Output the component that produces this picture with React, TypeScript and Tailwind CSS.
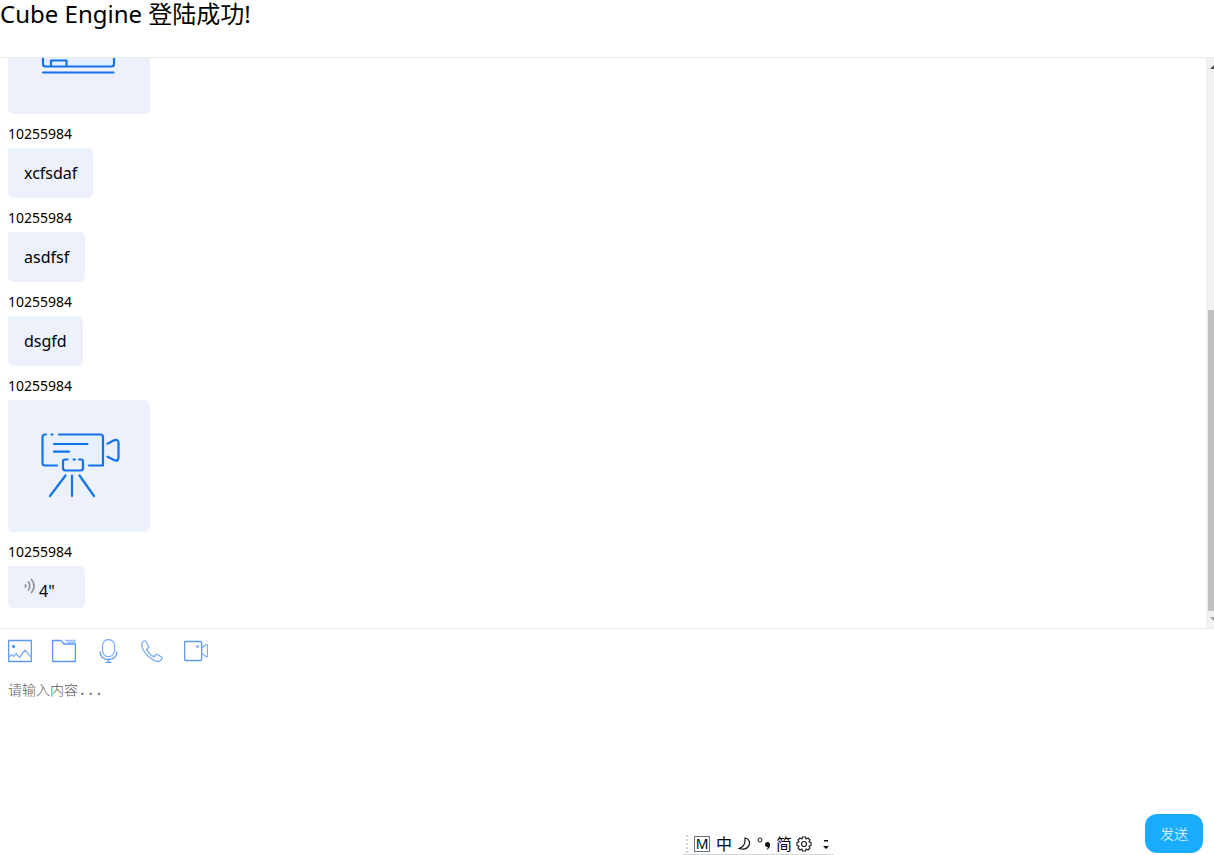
import React, { JSX, useState } from "react";

type Message = {
  id: number;
  sender?: string;
  type: "text" | "whiteboard" | "camera" | "voice";
  text?: string;
};

const messages: Message[] = [
  { id: 1, type: "whiteboard" },
  { id: 2, sender: "10255984", type: "text", text: "xcfsdaf" },
  { id: 3, sender: "10255984", type: "text", text: "asdfsf" },
  { id: 4, sender: "10255984", type: "text", text: "dsgfd" },
  { id: 5, sender: "10255984", type: "camera" },
  { id: 6, sender: "10255984", type: "voice", text: '4"' },
];

function WhiteboardPicture(): JSX.Element {
  return (
    <svg width="110" height="100" viewBox="0 0 110 100" fill="none" stroke="#1273eb" strokeWidth="2.2" strokeLinecap="round" strokeLinejoin="round">
      <path d="M19 28V66q0 2.500 2.500 2.500H87.500q2.500 0 2.500-2.500V28q0-2-2-2H21q-2 0-2 2z" fill="#e5f0fe" />
      <path d="M27 68V62.500H42.500V68" />
      <path d="M19 74.500H89.500" />
    </svg>
  );
}

function CameraPicture(): JSX.Element {
  return (
    <svg width="110" height="100" viewBox="0 0 110 100" fill="none" stroke="#1273eb" strokeWidth="2.2" strokeLinecap="round" strokeLinejoin="round">
      <path d="M19 20H78V49H19z" fill="#e7f1fe" stroke="none" />
      <path d="M22 18.500H21Q18.500 18.500 18.500 21V47Q18.500 49.500 21 49.500H33" />
      <path d="M27.500 18.500H28.500M35 18.500H76.500Q79 18.500 79 21V49.500H65" />
      <path d="M30 28H63.500M30 35.700H45" />
      <path d="M83.500 27.700L89.500 24.500Q94.500 22.500 94.500 27V41Q94.500 46 90 44L83.500 40.700" />
      <path d="M43.500 43.500H41Q39 43.500 39 45.500V52Q39 54.500 41.500 54.500H56.500Q59 54.500 59 52V45.500Q59 43.500 57 43.500H55M49.500 43.500H51" />
      <path d="M41.500 59.500L26 80M48 59.500V80M55.500 59.500L70 80" />
    </svg>
  );
}

function VoiceIcon(): JSX.Element {
  return (
    <svg width="12" height="16" viewBox="0 0 12 16" fill="none" stroke="#92969d" strokeLinecap="round" className="mb-0.5">
      <path d="M1.500 7Q2.200 8 1.500 9" strokeWidth="1.800" />
      <path d="M4.500 4Q7 8 4.500 12" strokeWidth="1.700" />
      <path d="M7.500 1.500Q12.500 8 7.500 14.500" strokeWidth="1.700" />
    </svg>
  );
}

function Bubble({ message }: { message: Message }): JSX.Element {
  const base = "w-fit rounded-[5px] rounded-tl-none bg-[#ecf1fc] px-4";

  if (message.type === "whiteboard" || message.type === "camera") {
    return (
      <div className={`${base} py-4`}>
        {message.type === "camera" ? <CameraPicture /> : <WhiteboardPicture />}
      </div>
    );
  }

  if (message.type === "voice") {
    return (
      <button type="button" className={`${base} flex h-[42px] min-w-[77px] items-center gap-[3px]`}>
        <VoiceIcon />
        <span className="mt-2 text-base">{message.text}</span>
      </button>
    );
  }

  return <p className={`${base} py-[13px] text-base leading-6`}>{message.text}</p>;
}

const tools = [
  {
    label: "图片",
    icon: (
      <>
        <path d="M.6 1.500H23.400V22.500H.6z" />
        <path d="M.6 18.500L3.500 15.500L6 17.500L8 14.500L11.500 18.500L17 11L23.400 18.500" stroke="#7fb0f7" />
        <circle cx="5.500" cy="7.500" r="1" fill="#4f8ff0" />
      </>
    ),
  },
  {
    label: "文件",
    icon: (
      <>
        <path d="M.6 1.500H9L12 5H23.400V22.500H.6z" />
        <path d="M13 1.500H23.500M15 3.500H23.500" stroke="#94bdf8" />
      </>
    ),
  },
  {
    label: "语音",
    icon: (
      <>
        <rect x="6.500" y=".6" width="12" height="17" rx="6" stroke="#7fb0f7" />
        <path d="M4 12.500Q4.500 20.500 12.500 20.500T21 12.500M12.500 20.500V23.400M9.500 23.400H15.500" />
      </>
    ),
  },
  {
    label: "通话",
    icon: (
      <path stroke="#7aabf5" d="M6 2.500L8.500 7Q9 8 8 9L6.500 10.500Q9 15.500 14 18L15.500 16Q16.500 15 17.500 15.500L21.500 18Q22.500 18.500 22 19.500Q21 22 18.500 22.500Q14 22.500 8 17Q2 11 1.500 5.500Q1.500 3.500 4 2Q5.500 1.500 6 2.500z" />
    ),
  },
  {
    label: "视频",
    icon: (
      <>
        <rect x=".6" y="2.500" width="17" height="19" rx="1" />
        <path d="M18 9L22 5.500Q23.400 5 23.400 6.500V17Q23.400 18.500 22 17.500L18 14.500" stroke="#7fb0f7" />
        <circle cx="13.500" cy="7.500" r=".6" />
      </>
    ),
  },
];

function ScrollRail(): JSX.Element {
  return (
    <div className="flex w-2 shrink-0 flex-col items-end overflow-hidden bg-[#f1f1f1]" aria-hidden="true">
      <svg width="4" height="17" viewBox="0 0 4 17" fill="#505050">
        <path d="M0 11L4 7V11z" />
      </svg>
      <div className="grow-[235]" />
      <div className="w-1.5 grow-[301] bg-[#c1c1c1]" />
      <svg width="4" height="17" viewBox="0 0 4 17" fill="#a0a0a0">
        <path d="M0 6H4V10z" />
      </svg>
    </div>
  );
}

function InputMethodBar(): JSX.Element {
  return (
    <div className="absolute bottom-0 left-[683px] flex h-[22px] w-[151px] items-center border-b border-gray-300 bg-white pl-[3px] text-base leading-5 text-black">
      <span className="mr-1.5 h-[18px] border-l-2 border-dotted border-gray-300" />
      <span className="flex size-4 items-center justify-center border border-gray-500 text-sm">M</span>
      <span className="ml-1.5">中</span>
      <svg width="14" height="16" viewBox="0 0 14 16" fill="none" stroke="#111" strokeWidth="1.200" className="ml-1.5">
        <path d="M7 2Q12 3 11.500 8Q9 15 1 12.500Q8 10 7 2z" />
      </svg>
      <svg width="16" height="16" viewBox="0 0 16 16" className="ml-1">
        <circle cx="4" cy="4" r="2" fill="none" stroke="#111" />
        <circle cx="11.500" cy="8.500" r="2.500" fill="#111" />
        <path d="M14 8.500Q14.500 12.500 10 14Q12.500 11.500 11.500 9z" fill="#111" />
      </svg>
      <span className="ml-1">简</span>
      <svg width="16" height="16" viewBox="0 0 16 16" fill="none" stroke="#222" strokeWidth="1.200" strokeLinejoin="round" className="ml-1">
        <path d="M6.500 1H9.500L10 3L12 2L14 4L13 6L15 6.500V9.500L13 10L14 12L12 14L10 13L9.500 15H6.500L6 13L4 14L2 12L3 10L1 9.500V6.500L3 6L2 4L4 2L6 3z" />
        <circle cx="8" cy="8" r="2.500" />
      </svg>
      <svg width="8" height="16" viewBox="0 0 8 16" fill="#111" className="ml-2.5">
        <path d="M2 4H6V5.500H2zM1 10H7L4 13z" />
      </svg>
    </div>
  );
}

function App(): JSX.Element {
  const [draft, setDraft] = useState<string>("");

  return (
    <div className="relative flex h-screen flex-col overflow-hidden bg-white font-['Noto_Sans','Noto_Sans_CJK_SC',sans-serif] text-black">
      <header className="h-[57px] shrink-0">
        <h1 className="text-2xl leading-7 font-normal">Cube Engine 登陆成功!</h1>
      </header>

      <main className="flex min-h-0 flex-1 border-y border-[#ebebeb]">
        <div className="flex min-w-0 flex-1 flex-col justify-end overflow-hidden px-2 pb-5">
          {messages.map((message) => (
            <div key={message.id} className="shrink-0">
              {message.sender && (
                <p className="pt-2.5 pb-1 text-sm leading-5">{message.sender}</p>
              )}
              <Bubble message={message} />
            </div>
          ))}
        </div>
        <ScrollRail />
      </main>

      <form
        className="flex h-[226px] shrink-0 flex-col px-2 pt-2.5 pb-0.5"
        onSubmit={(e) => {
          e.preventDefault();
          setDraft("");
        }}
      >
        <div className="flex gap-5">
          {tools.map((tool) => (
            <button key={tool.label} type="button" aria-label={tool.label}>
              <svg width="24" height="24" viewBox="0 0 24 24" fill="none" stroke="#5b98f2" strokeWidth="1.300" strokeLinejoin="round">
                {tool.icon}
              </svg>
            </button>
          ))}
        </div>
        <textarea
          aria-label="请输入内容"
          placeholder="请输入内容..."
          value={draft}
          onChange={(e) => setDraft(e.target.value)}
          className="mt-[18px] w-full flex-1 resize-none font-['Liberation_Mono','Noto_Sans_CJK_SC',monospace] text-sm leading-5 font-light outline-none placeholder:text-[#606060]"
        />
        <button
          type="submit"
          className="mr-[3px] h-[39px] w-[58px] shrink-0 self-end rounded-xl bg-[#1aadff] text-sm font-light text-white"
        >
          发送
        </button>
      </form>

      <InputMethodBar />
    </div>
  );
}

export default App;
